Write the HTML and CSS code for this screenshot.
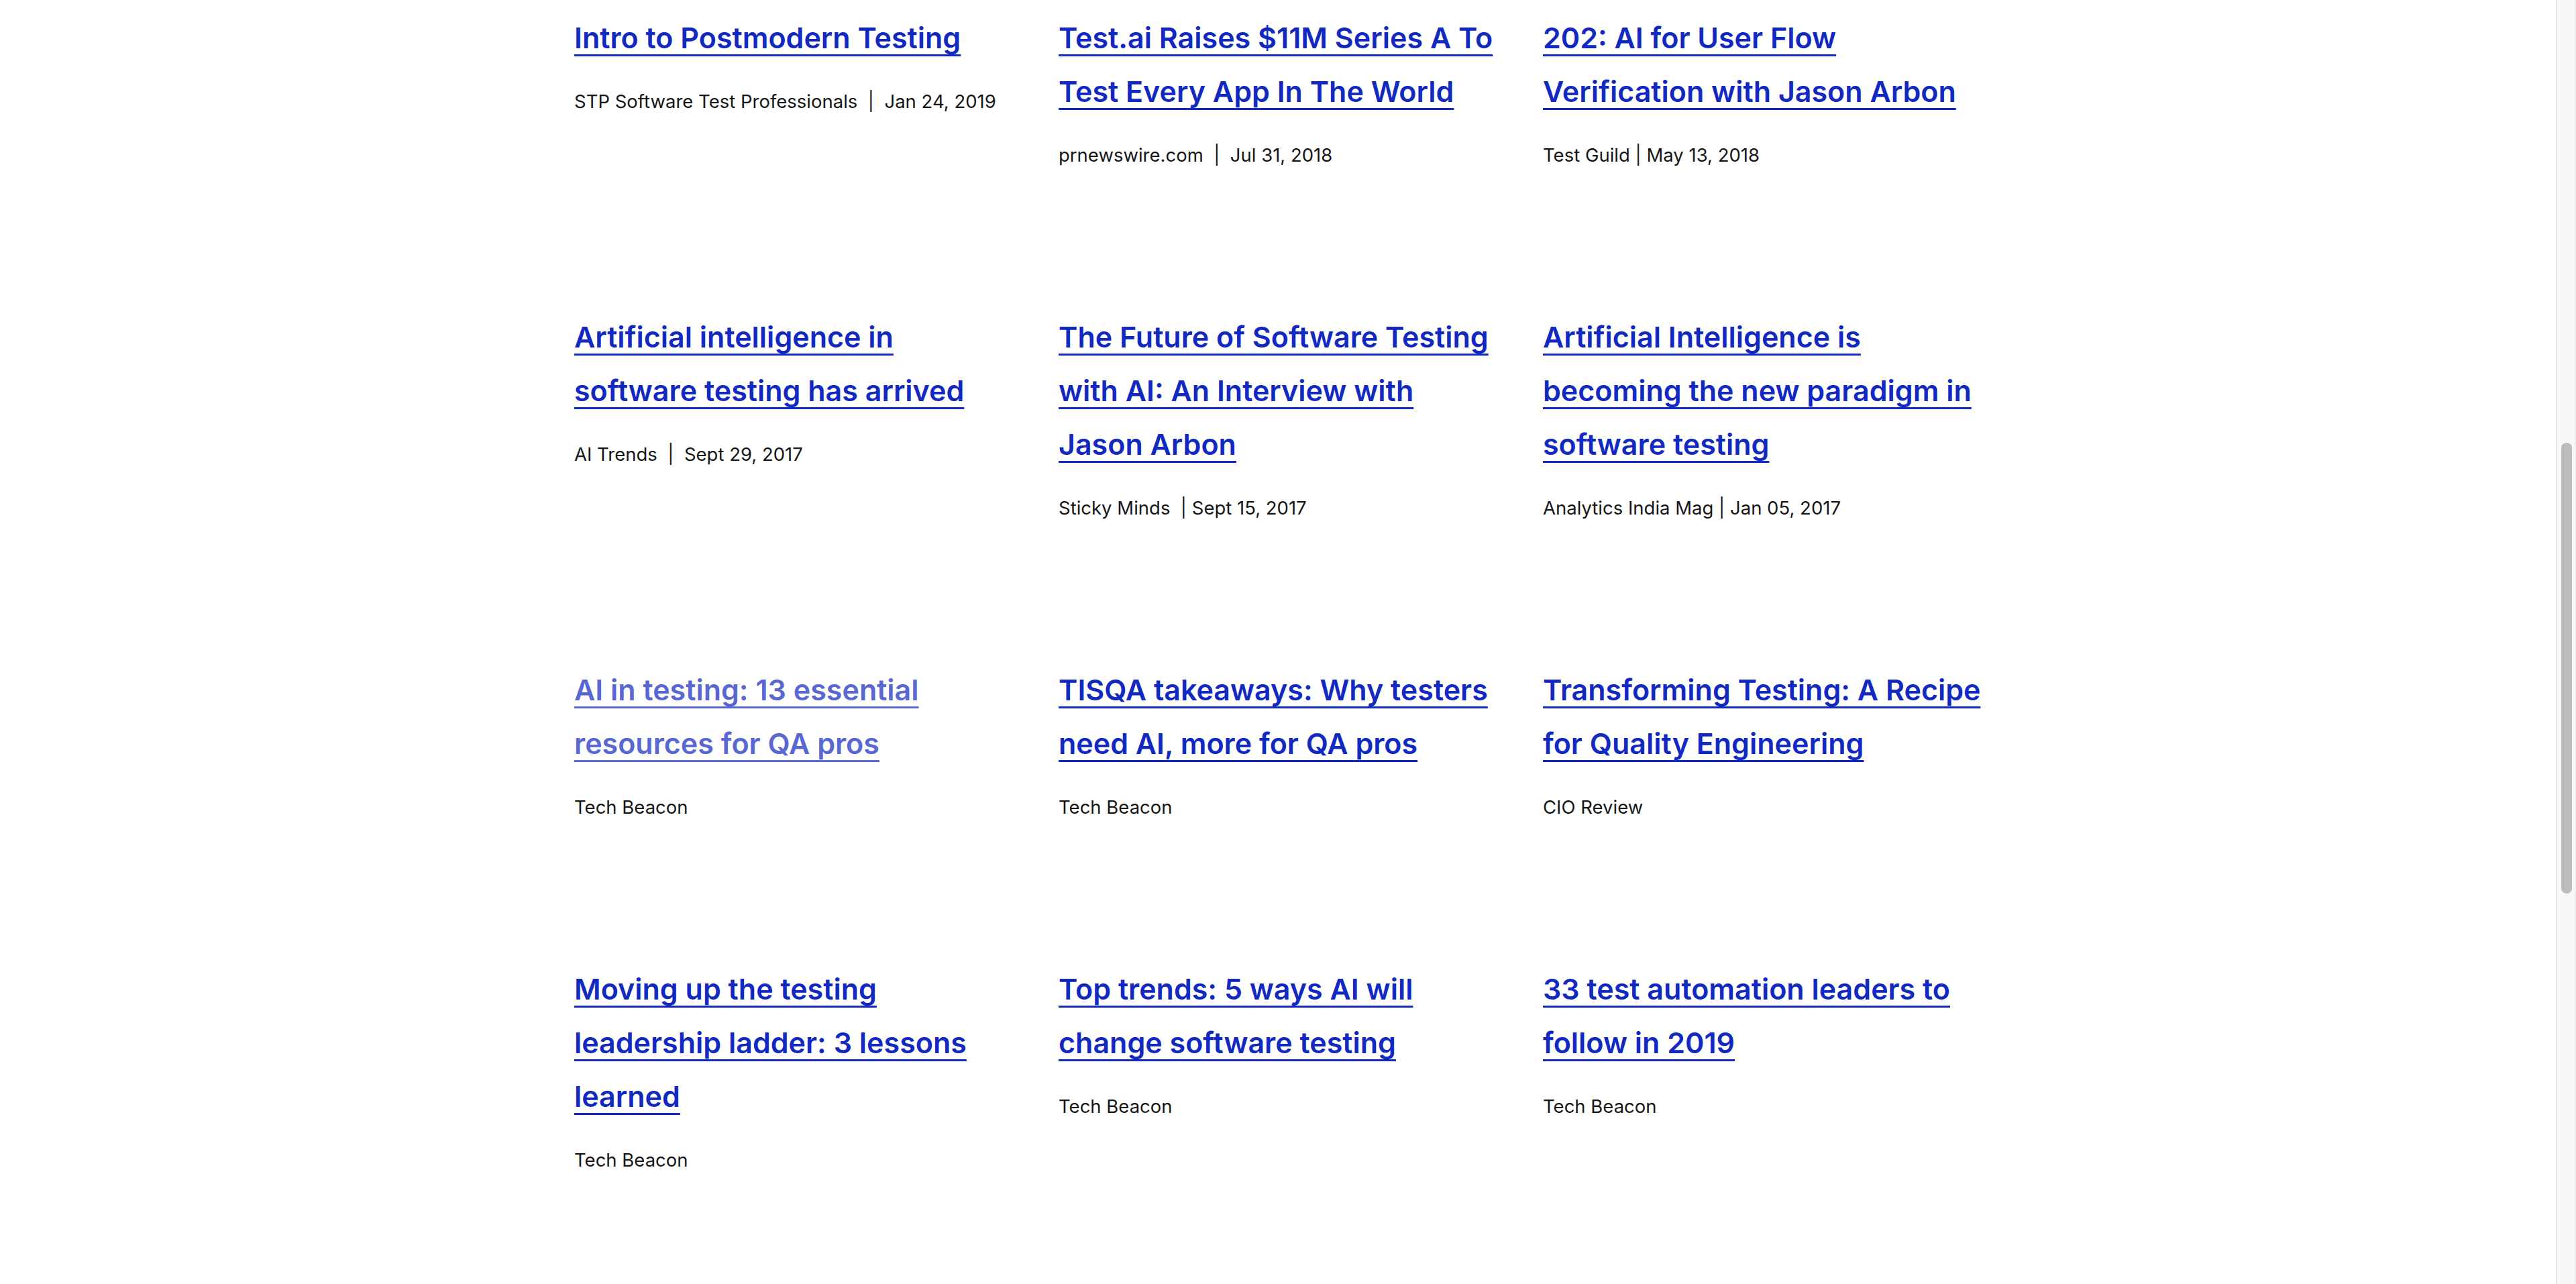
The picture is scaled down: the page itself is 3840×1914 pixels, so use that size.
FILE: index.html
```html
<!DOCTYPE html>
<html lang="en">
<head>
<meta charset="utf-8">
<title>In the News</title>
<link rel="stylesheet" href="styles.css">
</head>
<body>
<div class="page">
  <main class="main">
    <section class="news">
      <article class="card">
        <h3 class="title"><a href="#" class="link">Intro to Postmodern Testing</a></h3>
        <p class="meta">STP Software Test Professionals &nbsp;|&nbsp; Jan 24, 2019</p>
      </article>
      <article class="card">
        <h3 class="title"><a href="#" class="link">Test.ai Raises $11M Series A To Test Every App In The World</a></h3>
        <p class="meta">prnewswire.com &nbsp;|&nbsp; Jul 31, 2018</p>
      </article>
      <article class="card">
        <h3 class="title"><a href="#" class="link">202: AI for User Flow Verification with Jason Arbon</a></h3>
        <p class="meta">Test Guild | May 13, 2018</p>
      </article>

      <article class="card">
        <h3 class="title"><a href="#" class="link">Artificial intelligence in software testing has arrived</a></h3>
        <p class="meta">AI Trends &nbsp;|&nbsp; Sept 29, 2017</p>
      </article>
      <article class="card">
        <h3 class="title"><a href="#" class="link">The Future of Software Testing with AI: An Interview with Jason Arbon</a></h3>
        <p class="meta">Sticky Minds &nbsp;| Sept 15, 2017</p>
      </article>
      <article class="card">
        <h3 class="title"><a href="#" class="link">Artificial Intelligence is becoming the new paradigm in software testing</a></h3>
        <p class="meta">Analytics India Mag | Jan 05, 2017</p>
      </article>

      <article class="card">
        <h3 class="title"><a href="#" class="link link-visited">AI in testing: 13 essential resources for QA pros</a></h3>
        <p class="meta">Tech Beacon</p>
      </article>
      <article class="card">
        <h3 class="title"><a href="#" class="link">TISQA takeaways: Why testers need AI, more for QA pros</a></h3>
        <p class="meta">Tech Beacon</p>
      </article>
      <article class="card">
        <h3 class="title"><a href="#" class="link">Transforming Testing: A Recipe for Quality Engineering</a></h3>
        <p class="meta">CIO Review</p>
      </article>

      <article class="card">
        <h3 class="title"><a href="#" class="link">Moving up the testing leadership ladder: 3 lessons learned</a></h3>
        <p class="meta">Tech Beacon</p>
      </article>
      <article class="card">
        <h3 class="title"><a href="#" class="link">Top trends: 5 ways AI will change software testing</a></h3>
        <p class="meta">Tech Beacon</p>
      </article>
      <article class="card">
        <h3 class="title"><a href="#" class="link">33 test automation leaders to follow in 2019</a></h3>
        <p class="meta">Tech Beacon</p>
      </article>
    </section>
  </main>
  <aside class="scrollbar" aria-hidden="true">
    <div class="scrollbar-thumb"></div>
  </aside>
</div>
</body>
</html>
```
FILE: styles.css
```css
html, body {
  margin: 0;
  padding: 0;
  height: 100%;
  overflow: hidden;
  background: #ffffff;
}

body {
  font-family: "Inter", "Noto Sans", "Liberation Sans", sans-serif;
  color: #161616;
}

.page {
  display: flex;
  height: 100%;
}

.main {
  flex: 1;
  min-width: 0;
  padding-top: 16px;
  padding-left: 10px;
}

.news {
  width: 2108px;
  margin: 0 auto;
  display: grid;
  grid-template-columns: repeat(3, 658px);
  column-gap: 64px;
  row-gap: 211px;
  align-items: start;
}

.card {
  margin: 0;
}

.title {
  margin: 0;
  font-size: 43px;
  line-height: 80px;
  font-weight: 600;
}

.link {
  color: #1229c1;
  text-decoration: underline;
  text-decoration-thickness: 3px;
  text-underline-offset: 9px;
}

.link-visited {
  color: #5867d1;
}

.meta {
  margin: 35px 0 0;
  font-size: 27.5px;
  line-height: 40px;
  font-weight: 400;
  color: #161616;
  white-space: pre-wrap;
}

.scrollbar {
  width: 26px;
  flex: none;
  background: #f8f8f8;
  border-left: 2px solid #e7e7e7;
  border-right: 2px solid #efefef;
  padding-top: 660px;
}

.scrollbar-thumb {
  width: 16px;
  height: 672px;
  margin-left: 6px;
  background: #bcbcbc;
  border-radius: 8px;
}
```
